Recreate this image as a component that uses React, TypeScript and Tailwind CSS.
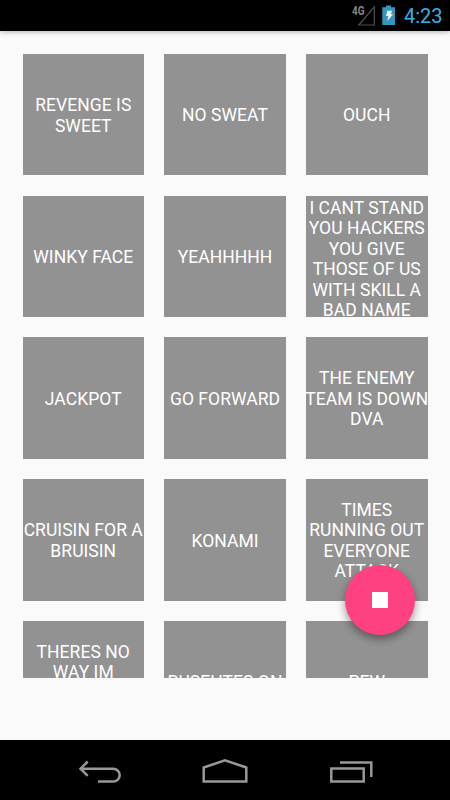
type Tile = {
    lines: string[];
    align?: string;
};

const tiles: Tile[] = [
    { lines: ["REVENGE IS", "SWEET"] },
    { lines: ["NO SWEAT"] },
    { lines: ["OUCH"] },
    { lines: ["WINKY FACE"] },
    { lines: ["YEAHHHHH"] },
    {
        lines: ["I CANT STAND", "YOU HACKERS", "YOU GIVE", "THOSE OF US", "WITH SKILL A", "BAD NAME"],
        align: "justify-start pt-[2.25px]",
    },
    { lines: ["JACKPOT"] },
    { lines: ["GO FORWARD"] },
    { lines: ["THE ENEMY", "TEAM IS DOWN", "DVA"] },
    { lines: ["CRUISIN FOR A", "BRUISIN"] },
    { lines: ["KONAMI"] },
    { lines: ["TIMES", "RUNNING OUT", "EVERYONE", "ATTACK"] },
    { lines: ["THERES NO", "WAY IM"], align: "justify-start pt-[21px]" },
    { lines: ["RUSEHTES ON"] },
    { lines: ["PEW"] },
];

const StatusBar = () => (
    <header className="relative z-10 flex h-[31px] shrink-0 items-center justify-end bg-black pr-[7px] shadow-[0_1px_5px_rgba(0,0,0,0.3)]">
        <svg className="h-[31px] w-[52px]" viewBox="0 0 52 31">
            <path d="M22.300 6.800V25H6.800Z" fill="none" stroke="#505050" strokeWidth="1.2" />
            <text
                x="0"
                y="14.500"
                fill="#858585"
                fontFamily="Roboto"
                fontWeight="700"
                fontSize="12"
                textLength="12.500"
                lengthAdjust="spacingAndGlyphs"
            >
                4G
            </text>
            <path d="M30.300 7.200h3.700V5.400h5v1.800h4V25H30.300Z" fill="#3298bf" />
            <path d="M35.300 10.800h4.800l-1.300 3.400h2.300l-5.800 6.800 1-5h-2.300Z" fill="#eef6fa" />
        </svg>
        <span className="w-[39px] pt-[2px] text-[20px] leading-[31px] text-[#33b5e5]">4:23</span>
    </header>
);

const SoundTile = ({ lines, align = "justify-center pt-[2px]" }: Tile) => (
    <button
        className={`flex h-[121.5px] w-[121.5px] flex-col items-center overflow-hidden bg-[#929292] text-[17.5px] leading-[20.5px] tracking-[0.05px] whitespace-nowrap text-white ${align}`}
    >
        {lines.map((line) => (
            <span key={line} className="shrink-0">
                {line}
            </span>
        ))}
    </button>
);

const NavBar = () => (
    <nav className="flex h-[60px] shrink-0 items-center justify-between bg-black px-[75px] text-[#989898]">
        <svg className="h-[60px] w-[50px]" viewBox="0 0 50 60" fill="none" stroke="currentColor" strokeWidth="2.500">
            <path d="M5.300 28.700H38.300a6.400 6.400 0 0 1 0 12.800H23M12.700 21.500L5.500 28.700l7.200 7.200" />
        </svg>
        <svg className="h-[60px] w-[50px]" viewBox="0 0 50 60" fill="none" stroke="currentColor" strokeWidth="2.500">
            <path d="M3.700 41.500V27.500L25 20.300l21.300 7.200v14Z" />
        </svg>
        <svg className="h-[60px] w-[50px]" viewBox="0 0 50 60" fill="none" stroke="currentColor" strokeWidth="2.500">
            <path d="M6.300 28.500h32.400v13H6.300ZM15 22.500h31.300V37" />
        </svg>
    </nav>
);

export default function App() {
    return (
        <div className="flex h-[800px] w-[450px] flex-col overflow-hidden bg-[#fafafa] font-[Roboto,sans-serif]">
            <StatusBar />
            <main className="relative flex-1 px-[22.5px] pt-[22.75px]">
                <div className="grid h-[623.75px] grid-cols-[repeat(3,121.5px)] content-start gap-[20.25px] overflow-hidden">
                    {tiles.map((tile) => (
                        <SoundTile key={tile.lines[0]} {...tile} />
                    ))}
                </div>
                <button
                    aria-label="Stop"
                    className="absolute top-[534px] left-[345px] flex h-[70px] w-[70px] items-center justify-center rounded-full bg-[#ff4081] shadow-[0_4px_8px_rgba(0,0,0,0.4)]"
                >
                    <span className="h-4 w-4 bg-white" />
                </button>
            </main>
            <NavBar />
        </div>
    );
}
